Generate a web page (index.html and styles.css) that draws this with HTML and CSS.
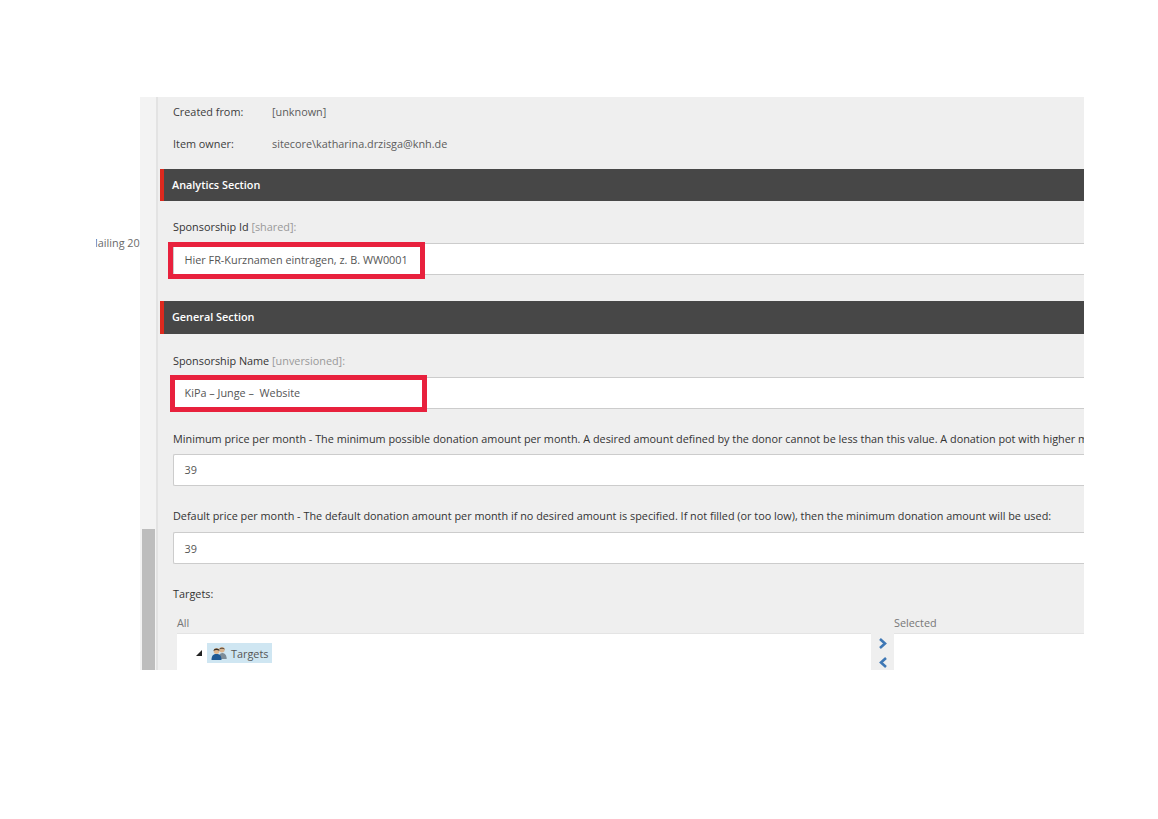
FILE: index.html
```html
<!DOCTYPE html>
<html lang="de">
<head>
<meta charset="utf-8">
<title>Sponsorship</title>
<link rel="stylesheet" href="styles.css">
</head>
<body>
<div class="shot">
  <div class="tree-clip"><span class="tree-text">Mailing 2020</span></div>
  <div class="scroll"><div class="thumb"></div></div>
  <div class="panel">
    <div class="meta-row first"><span class="meta-key">Created from:</span><span class="meta-val">[unknown]</span></div>
    <div class="meta-row second"><span class="meta-key">Item owner:</span><span class="meta-val">sitecore\katharina.drzisga@knh.de</span></div>

    <div class="section">Analytics Section</div>
    <div class="label label-a">Sponsorship Id <span class="muted">[shared]</span><span class="muted">:</span></div>
    <div class="input">Hier FR-Kurznamen eintragen, z. B. WW0001</div>

    <div class="section section-b">General Section</div>
    <div class="label label-a label-name">Sponsorship Name <span class="muted">[unversioned]</span><span class="muted">:</span></div>
    <div class="input input-up">KiPa – Junge –&nbsp; Website</div>

    <div class="label label-b">Minimum price per month - The minimum possible donation amount per month. A desired amount defined by the donor cannot be less than this value. A donation pot with higher minimum amount will be used:</div>
    <div class="input input-tight input-up">39</div>

    <div class="label label-b">Default price per month - The default donation amount per month if no desired amount is specified. If not filled (or too low), then the minimum donation amount will be used:</div>
    <div class="input">39</div>

    <div class="label label-t">Targets:</div>
    <div class="lists">
      <div class="list-all">
        <div class="caption">All</div>
        <div class="box">
          <div class="node">
            <span class="twisty"></span>
            <span class="node-sel">
              <svg class="people" width="16" height="14" viewBox="0 0 16 14"><circle cx="11" cy="3.800" r="2.700" fill="#d9b48f"/><path d="M8.200 3.500C8.400 1 13.600 1 13.800 3.500 12 2.500 10 2.500 8.200 3.500z" fill="#5a4a3a"/><path d="M7.500 13c0-4 1.300-6 3.700-6s4.500 2 4.500 6z" fill="#7d8d99"/><circle cx="5.500" cy="5" r="2.900" fill="#e0b88f"/><path d="M2.500 5C2.600 1.700 8.400 1.700 8.500 5 6.500 3.800 4.500 3.800 2.500 5z" fill="#3a3027"/><path d="M.5 14c0-4.500 2-6 5-6s5 1.500 5 6z" fill="#1f5a94"/></svg>
              Targets
            </span>
          </div>
        </div>
      </div>
      <div class="arrows">
        <svg width="10" height="11" viewBox="0 0 10 11"><path d="M2 1l5 4.500-5 4.500" fill="none" stroke="#3f78b5" stroke-width="2.600"/></svg>
        <svg width="10" height="11" viewBox="0 0 10 11"><path d="M8 1L3 5.500l5 4.500" fill="none" stroke="#3f78b5" stroke-width="2.600"/></svg>
      </div>
      <div class="list-sel">
        <div class="caption">Selected</div>
        <div class="box box-sel"></div>
      </div>
    </div>
  </div>
  <div class="mark mark-one"></div>
  <div class="mark mark-two"></div>
</div>
</body>
</html>
```

FILE: styles.css
```css
html, body {
  margin: 0;
  padding: 0;
  background: #fff;
}

body {
  height: 819px;
  overflow: hidden;
  font-family: "Open Sans", sans-serif;
  font-size: 10.85px;
  color: #474747;
}

.shot {
  position: relative;
  display: flex;
  margin: 97px 0 0 96px;
  width: 988px;
  height: 573px;
  overflow: hidden;
}

.tree-clip {
  width: 44px;
  flex: none;
  overflow: hidden;
  background: #fff;
  padding-top: 138px;
}

.tree-text {
  display: block;
  white-space: nowrap;
  width: 44px;
  text-indent: -8px;
  line-height: 16px;
  color: #6a6a6a;
}

.scroll {
  width: 16px;
  flex: none;
  background: #f3f3f3;
  padding-left: 2px;
  box-sizing: border-box;
  display: flex;
  flex-direction: column;
  justify-content: flex-end;
}

.thumb {
  width: 13px;
  height: 141px;
  background: #bdbdbd;
}

.panel {
  flex: 1;
  min-width: 0;
  background: #efefef;
  border-left: 2px solid #e3e3e3;
  padding-left: 2px;
  overflow: hidden;
}

.meta-row {
  display: flex;
  padding-left: 13px;
  height: 16px;
  line-height: 16px;
}

.meta-row.first { margin-top: 7px; }
.meta-row.second { margin-top: 16px; }

.meta-key {
  width: 99px;
  flex: none;
  color: #3c3c3c;
}

.meta-val { color: #5c5c5c; }

.section {
  margin-top: 17px;
  height: 32px;
  line-height: 32px;
  background: #474747;
  border-left: 4px solid #dc291e;
  padding-left: 8px;
  color: #fff;
  font-weight: 600;
}

.section-b {
  margin-top: 26px;
  height: 33px;
  line-height: 32px;
}

.label {
  margin-left: 13px;
  white-space: nowrap;
  line-height: 16px;
  color: #333;
}

.label-a { margin-top: 18px; }
.label-name { margin-top: 19px; }
.label-b { margin-top: 22px; }
.label-t { margin-top: 22px; }

.muted { color: #999; }

.input {
  margin: 8px 0 0 13px;
  height: 32px;
  box-sizing: border-box;
  background: #fff;
  border: 1px solid #ccc;
  border-right: 0;
  border-radius: 2px 0 0 2px;
  padding-left: 10.5px;
  line-height: 31px;
  color: #555;
  white-space: nowrap;
}

.input-tight { margin-top: 7px; }
.input-up { line-height: 30px; }

.lists {
  display: flex;
  margin: 13px 0 0 17px;
}

.list-all {
  width: 694px;
  flex: none;
}

.caption {
  height: 16px;
  line-height: 16px;
  color: #777;
}

.box {
  margin-top: 2px;
  height: 60px;
  background: #fff;
  border-top: 1px solid #e4e4e4;
  box-sizing: border-box;
}

.node {
  display: flex;
  align-items: center;
  padding: 9px 0 0 19px;
}

.twisty {
  width: 0;
  height: 0;
  border-style: solid;
  border-width: 0 0 6px 6px;
  border-color: transparent transparent #222 transparent;
  margin-right: 5px;
}

.node-sel {
  display: flex;
  align-items: center;
  gap: 4px;
  height: 20px;
  padding: 0 4px 0 4px;
  background: #cfe6f2;
  color: #555;
}

.arrows {
  width: 23px;
  flex: none;
  padding-top: 23px;
  display: flex;
  flex-direction: column;
  align-items: center;
  gap: 8px;
}

.list-sel { flex: 1; }

.mark {
  position: absolute;
  box-sizing: border-box;
  border: 5px solid #e8213d;
  width: 257px;
  height: 37px;
}

.mark-one { left: 72px; top: 145px; }
.mark-two { left: 74px; top: 278px; }
```
